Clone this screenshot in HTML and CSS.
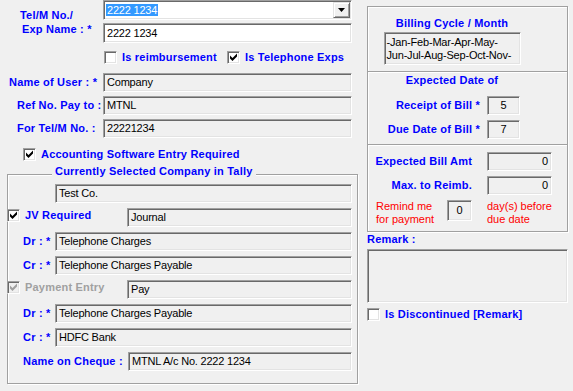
FILE: index.html
```html
<!DOCTYPE html>
<html>
<head>
<meta charset="utf-8">
<title>Telephone Expense</title>
<link rel="stylesheet" href="styles.css">
</head>
<body>
<div class="page">
  <div class="left">
    <div class="tel">
      <div class="tel-lbl lab">
        <div class="l1">Tel/M No./</div>
        <div class="l2">Exp Name : *</div>
      </div>
      <div class="tel-fields">
        <div class="combo">
          <span class="sel">2222 1234</span>
          <span class="drop"><svg width="7" height="4" viewBox="0 0 7 4"><path d="M0 0h7l-3.5 4z"/></svg></span>
        </div>
        <div class="box white tall">2222 1234</div>
      </div>
    </div>

    <div class="checks">
      <span class="cb"></span><span class="cbl lab w-reimb">Is reimbursement</span>
      <span class="cb"><svg width="9" height="9" viewBox="0 0 9 9"><path d="M1 2.5L3.5 5L8 .5V3.5L3.5 8L1 5.5Z"/></svg></span><span class="cbl lab">Is Telephone Exps</span>
    </div>

    <div class="row first">
      <div class="lbl lab p9">Name of User : *</div>
      <div class="box main">Company</div>
    </div>
    <div class="row">
      <div class="lbl lab p17">Ref No. Pay to :</div>
      <div class="box main">MTNL</div>
    </div>
    <div class="row">
      <div class="lbl lab p17">For Tel/M No. :</div>
      <div class="box main">22221234</div>
    </div>

    <div class="acct">
      <span class="cb"><svg width="9" height="9" viewBox="0 0 9 9"><path d="M1 2.5L3.5 5L8 .5V3.5L3.5 8L1 5.5Z"/></svg></span><span class="cbl lab">Accounting Software Entry Required</span>
    </div>

    <div class="grp">
      <div class="grp-title lab">Currently Selected Company in Tally</div>
      <div class="grow top">
        <div class="box wide ml47">Test Co.</div>
      </div>
      <div class="grow">
        <div class="gchk">
          <span class="cb"><svg width="9" height="9" viewBox="0 0 9 9"><path d="M1 2.5L3.5 5L8 .5V3.5L3.5 8L1 5.5Z"/></svg></span><span class="cbl lab">JV Required</span>
        </div>
        <div class="box mid">Journal</div>
      </div>
      <div class="grow">
        <div class="glbl lab">Dr : *</div>
        <div class="box wide">Telephone Charges</div>
      </div>
      <div class="grow">
        <div class="glbl lab">Cr : *</div>
        <div class="box wide">Telephone Charges Payable</div>
      </div>
      <div class="grow">
        <div class="gchk">
          <span class="cb dis"><svg width="9" height="9" viewBox="0 0 9 9"><path d="M1 2.5L3.5 5L8 .5V3.5L3.5 8L1 5.5Z"/></svg></span><span class="cbl lab disabled">Payment Entry</span>
        </div>
        <div class="box mid">Pay</div>
      </div>
      <div class="grow">
        <div class="glbl lab">Dr : *</div>
        <div class="box wide">Telephone Charges Payable</div>
      </div>
      <div class="grow">
        <div class="glbl lab">Cr : *</div>
        <div class="box wide">HDFC Bank</div>
      </div>
      <div class="grow">
        <div class="glbl lab cheque">Name on Cheque :</div>
        <div class="box chq">MTNL A/c No. 2222 1234</div>
      </div>
    </div>
  </div>

  <div class="right">
    <div class="sec s1">
      <div class="lab">Billing Cycle / Month</div>
      <div class="box months">-Jan-Feb-Mar-Apr-May-<br>Jun-Jul-Aug-Sep-Oct-Nov-</div>
    </div>
    <div class="sec s2">
      <div class="lab head">Expected Date of</div>
      <div class="drow first">
        <div class="dlbl lab">Receipt of Bill *</div>
        <div class="box small">5</div>
      </div>
      <div class="drow">
        <div class="dlbl lab">Due Date of Bill *</div>
        <div class="box small">7</div>
      </div>
    </div>
    <div class="sec s3">
      <div class="arow">
        <div class="albl lab">Expected Bill Amt</div>
        <div class="box amt">0</div>
      </div>
      <div class="arow">
        <div class="albl lab">Max. to Reimb.</div>
        <div class="box amt">0</div>
      </div>
      <div class="remind">
        <div class="red rtext">Remind me<br>for payment</div>
        <div class="box days">0</div>
        <div class="red after">day(s) before<br>due date</div>
      </div>
    </div>
    <div class="lab rem-lbl">Remark :</div>
    <div class="box remark"></div>
    <div class="disc">
      <span class="cb"></span><span class="cbl lab">Is Discontinued [Remark]</span>
    </div>
  </div>
</div>
</body>
</html>
```

FILE: styles.css
```css
* { box-sizing: border-box; }

body {
  margin: 0;
  background: #f0f0f0;
  font: 11px/13px "Liberation Sans", Arial, sans-serif;
  color: #000;
}

.page {
  display: flex;
  width: 573px;
  height: 391px;
  overflow: hidden;
}

.left { width: 360px; flex: none; }

.right {
  width: 201px;
  flex: none;
  margin-left: 7px;
  padding-top: 6px;
}

.lab {
  font-weight: bold;
  color: #0000ff;
  white-space: nowrap;
  letter-spacing: 0.2px;
}

.red { color: #ff0000; }

/* sunken text box */
.box {
  height: 19px;
  background: #f0f0f0;
  border: 1px solid;
  border-color: #a0a0a0 #ffffff #ffffff #a0a0a0;
  box-shadow: inset 1px 1px 0 #696969, inset -1px -1px 0 #e3e3e3;
  padding: 0 3px;
  display: flex;
  align-items: center;
  white-space: nowrap;
  letter-spacing: -0.2px;
  flex: none;
}
.box.white { background: #fff; }
.box.tall { height: 20px; }

/* checkbox */
.cb {
  width: 13px;
  height: 13px;
  flex: none;
  background: #fff;
  border: 1px solid;
  border-color: #a0a0a0 #ffffff #ffffff #a0a0a0;
  box-shadow: inset 1px 1px 0 #696969, inset -1px -1px 0 #e3e3e3;
  display: flex;
  align-items: center;
  justify-content: center;
}
.cb svg { display: block; fill: #000; }
.cb.dis { background: #f0f0f0; }
.cb.dis svg { fill: #a0a0a0; }
.cbl { margin-left: 5px; }
.disabled { color: #a0a0a0; }

/* top block */
.tel { display: flex; height: 43px; }
.tel-lbl { width: 103px; padding-top: 8px; line-height: 14px; }
.tel-lbl .l1 { padding-left: 20px; }
.tel-lbl .l2 { padding-left: 22px; }
.tel-fields {
  width: 249px;
  display: flex;
  flex-direction: column;
  gap: 3px;
}
.combo {
  height: 20px;
  background: #fff;
  border: 1px solid;
  border-color: #a0a0a0 #ffffff #ffffff #a0a0a0;
  box-shadow: inset 1px 1px 0 #696969, inset -1px -1px 0 #e3e3e3;
  display: flex;
  align-items: center;
  padding: 0 1px 0 2px;
}
.sel {
  background: #3399ff;
  color: #fff;
  padding: 0 1px;
  line-height: 12px;
  letter-spacing: -0.2px;
}
.drop {
  margin-left: auto;
  width: 17px;
  height: 16px;
  background: #f0f0f0;
  border: 1px solid;
  border-color: #e3e3e3 #696969 #696969 #e3e3e3;
  box-shadow: inset 1px 1px 0 #fff, inset -1px -1px 0 #a0a0a0;
  display: flex;
  align-items: center;
  justify-content: center;
}
.drop svg { display: block; fill: #000; }

.checks {
  display: flex;
  align-items: center;
  height: 13px;
  margin-top: 8px;
  padding-left: 104px;
}
.w-reimb { width: 105px; }

.row {
  display: flex;
  align-items: center;
  height: 19px;
  margin-top: 4px;
}
.row.first { margin-top: 9px; }
.row .lbl { width: 103px; }
.p9 { padding-left: 9px; }
.p17 { padding-left: 17px; }
.box.main { width: 249px; }

.acct {
  display: flex;
  align-items: center;
  height: 13px;
  margin-top: 10px;
  padding-left: 23px;
}

/* group box */
.grp {
  margin: 13px 0 0 7px;
  width: 351px;
  height: 210px;
  border: 1px solid #a0a0a0;
  box-shadow: inset 1px 1px 0 #fff, 1px 1px 0 #fff;
}
.grp-title {
  display: table;
  margin: -10px 0 0 44px;
  padding: 0 3px;
  background: #f0f0f0;
  line-height: 13px;
}
.grow {
  display: flex;
  align-items: center;
  height: 19px;
  margin-top: 5px;
}
.grow.top { margin-top: 6px; }
.ml47 { margin-left: 47px; }
.box.wide { width: 297px; }
.box.mid { width: 225px; margin-left: auto; margin-right: 5px; }
.box.chq { width: 224px; }
.gchk {
  display: flex;
  align-items: center;
  height: 13px;
  align-self: flex-start;
  margin: 1px 0 0 -1px;
}
.glbl { width: 47px; padding-left: 15px; }
.glbl.cheque { width: 120px; }

/* right panel */
.sec {
  border: 1px solid #a0a0a0;
  box-shadow: inset 1px 1px 0 #fff, 1px 1px 0 #fff;
}
.sec + .sec { margin-top: -1px; }

.s1 {
  height: 66px;
  display: flex;
  flex-direction: column;
  align-items: center;
  padding: 10px 31px 0 0;
}
.box.months {
  display: block;
  width: 137px;
  height: 33px;
  margin-top: 2px;
  padding: 3px 0 0 2px;
  line-height: 13px;
}

.s2 { height: 74px; padding-top: 2px; }
.s2 .head { text-align: center; padding-right: 31px; }
.drow {
  display: flex;
  align-items: center;
  height: 19px;
  margin-top: 5px;
}
.drow.first { margin-top: 9px; }
.dlbl { width: 113px; text-align: right; padding-right: 1px; }
.box.small { width: 33px; margin-left: 6px; justify-content: center; }

.s3 { height: 88px; padding-top: 7px; }
.arow {
  display: flex;
  align-items: center;
  height: 19px;
  margin-bottom: 5px;
}
.albl { width: 105px; text-align: right; padding-right: 1px; }
.box.amt { width: 65px; margin-left: 14px; justify-content: flex-end; }

.remind { display: flex; align-items: flex-start; }
.rtext { width: 79px; padding-left: 8px; white-space: nowrap; }
.box.days { width: 25px; height: 21px; justify-content: center; }
.after { margin-left: 15px; white-space: nowrap; }

.rem-lbl { margin-top: 1px; }
.box.remark { width: 201px; height: 54px; margin-top: 3px; }
.disc {
  display: flex;
  align-items: center;
  height: 13px;
  margin-top: 5px;
}
```
